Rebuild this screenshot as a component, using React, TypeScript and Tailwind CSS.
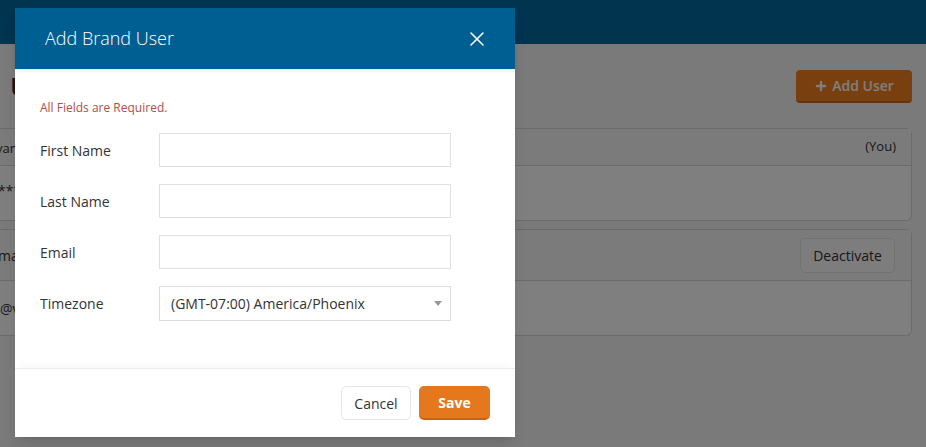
import { X, Plus } from "lucide-react";

const FIELDS = ["First Name", "Last Name", "Email"];

function BackgroundPage() {
  return (
    <div className="min-h-[447px] bg-[#f4f4f4]">
      {/* Top nav */}
      <div className="h-[44px] bg-[#00689e]" />

      <div className="pr-[14px]">
        {/* Title row */}
        <div className="flex items-start justify-between pt-[26px] pl-[10px]">
          <h1 className="text-[26px] leading-[32px] font-semibold text-[#333]">Users</h1>
          <button className="flex h-[33px] w-[116px] items-center justify-center gap-1 rounded-[4px] border-b-2 border-[#d0661a] bg-[#f47e1e] text-[14px] font-semibold text-white">
            <Plus size={14} strokeWidth={4} />
            Add User
          </button>
        </div>

        {/* Cards */}
        <div className="mt-[25px] flex flex-col gap-[8px] -ml-[2px]">
          <div className="rounded-r-[6px] border border-l-0 border-[#d6d6d6] bg-white">
            <div className="flex h-[37px] items-center justify-between border-b border-[#d6d6d6] bg-[#f6f6f6] pr-[15px] text-[13px] text-[#333]">
              <span className="-ml-[2px] pt-[4px]">vanessa</span>
              <span>(You)</span>
            </div>
            <div className="flex h-[54px] items-center text-[14px] text-[#333]">
              <span className="pb-[6px]">****</span>
            </div>
          </div>

          <div className="rounded-r-[6px] border border-l-0 border-[#d6d6d6] bg-white">
            <div className="flex h-[51px] items-center justify-between border-b border-[#d6d6d6] bg-[#f6f6f6] pr-[16px] text-[14px] text-[#333]">
              <span>mark</span>
              <button className="h-[35px] w-[95px] rounded-[5px] border border-[#e4e4e4] bg-[#fafafa] text-[14px] text-[#333]">
                Deactivate
              </button>
            </div>
            <div className="flex h-[54px] items-center text-[14px] text-[#333]">
              <span className="pl-[2px]">@vendor.com</span>
            </div>
          </div>
        </div>
      </div>
    </div>
  );
}

function AddUserModal() {
  return (
    <div className="absolute left-[15px] top-[8px] w-[500px] bg-white shadow-lg">
      {/* Header */}
      <div className="relative z-10 flex h-[61px] items-center justify-between bg-[#005f92] pl-[30px] pr-[26px] shadow-[0_2px_3px_rgba(0,0,0,0.08)]">
        <h2 className="text-[18px] font-light text-white">Add Brand User</h2>
        <X size={24} strokeWidth={1.6} className="text-white" />
      </div>

      {/* Body */}
      <div className="px-[25px] pt-[31px] pb-[47px]">
        <p className="text-[12px] leading-[16px] text-[#b94a48]">All Fields are Required.</p>

        <div className="mt-[17px] flex flex-col gap-[17px]">
          {FIELDS.map((label) => (
            <div key={label} className="flex items-center">
              <label className="w-[119px] text-[14px] text-[#333]">{label}</label>
              <input
                type="text"
                className="h-[34px] w-[292px] border border-[#e0e0e0] bg-white px-3 text-[14px] outline-none"
              />
            </div>
          ))}
          <div className="flex items-center">
            <label className="w-[119px] text-[14px] text-[#333]">Timezone</label>
            <div className="flex h-[35px] w-[292px] items-center justify-between border border-[#dcdcdc] bg-white pl-[11px] pr-[8px] text-[14px] text-[#333]">
              <span>(GMT-07:00) America/Phoenix</span>
              <span className="h-0 w-0 border-x-[4px] border-t-[5px] border-x-transparent border-t-[#999]" />
            </div>
          </div>
        </div>
      </div>

      {/* Footer */}
      <div className="flex h-[69px] items-center justify-end gap-[8px] border-t border-[#ececec] pr-[25px] shadow-[0_-6px_8px_-4px_rgba(0,0,0,0.04)]">
        <button className="h-[34px] w-[70px] rounded-[5px] border border-[#e4e4e4] bg-white text-[14px] text-[#333]">
          Cancel
        </button>
        <button className="h-[34px] w-[71px] rounded-[5px] border-b-2 border-[#c8641a] bg-[#e5781c] text-[14px] font-bold text-white">
          Save
        </button>
      </div>
    </div>
  );
}

export default function App() {
  return (
    <div className="relative h-[447px] w-[926px] overflow-hidden font-['Open_Sans',sans-serif]">
      <BackgroundPage />
      {/* Backdrop */}
      <div className="absolute inset-0 bg-black/50" />
      <AddUserModal />
    </div>
  );
}
